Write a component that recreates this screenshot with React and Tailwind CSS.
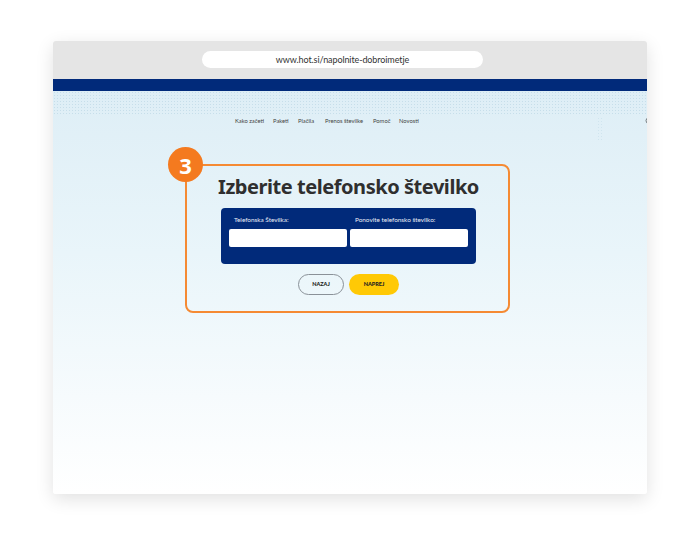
import React from "react";
import { Search } from "lucide-react";

const navLinks = [
  { label: "Kako začeti", width: "w-[38px]" },
  { label: "Paketi", width: "w-[25px]" },
  { label: "Plačila", width: "w-[27px]" },
  { label: "Prenos številke", width: "w-[48px]" },
  { label: "Pomoč", width: "w-[26px]" },
  { label: "Novosti", width: "w-[20px]" },
];

const Field = ({ label }) => (
  <div className="flex w-[118px] flex-col">
    <label className="mb-[4px] ml-[5px] h-[11px] text-[6.4px] leading-[11px] text-[#e8edf6]">{label}</label>
    <div className="h-[18px] rounded-[2px] bg-white" />
  </div>
);

const App = () => {
  return (
    <div className="h-[544px] w-[700px] overflow-hidden bg-white pl-[53px] pt-[41px] font-['Lato',sans-serif]">
      <div className="flex h-[453px] w-[594px] flex-col overflow-hidden rounded-[3px] shadow-[0_5px_18px_rgba(0,0,0,0.12)]">
        <div className="flex h-[38px] items-start justify-center bg-[#e5e5e5] pr-[15px] pt-[10px]">
          <div className="flex h-[17px] w-[281px] items-center justify-center rounded-full bg-white text-[9px] tracking-[-0.1px] text-[#333]">
            www.hot.si/napolnite-dobroimetje
          </div>
        </div>
        <div className="h-[12px] bg-[#012a7a]" />

        <div className="relative flex flex-1 flex-col bg-gradient-to-b from-[#deeef6] via-[#e9f5fa] via-40% to-white">
          <div className="h-[24px] bg-[radial-gradient(#c6deea_0.8px,transparent_0.9px)] bg-[length:3px_3px]" />
          <div className="absolute left-[544px] top-[26px] h-[23px] w-[6px] bg-[radial-gradient(#d0e5ef_0.8px,transparent_0.9px)] bg-[length:3px_3px]" />

          <nav className="mt-[1px] flex h-[10px] items-center pl-[182px] text-[5.8px] leading-[10px] text-[#444]">
            {navLinks.map((link) => (
              <a key={link.label} className={`${link.width} whitespace-nowrap`}>
                {link.label}
              </a>
            ))}
            <Search className="ml-auto mr-[-6px] h-[8px] w-[8px] text-[#444]" strokeWidth={2} />
          </nav>

          <div className="relative ml-[132px] mt-[38px] flex h-[149px] w-[325px] flex-col items-center rounded-[8px] border-2 border-[#f58a33] pl-[2px] pt-[7px]">
            <div className="absolute left-[-19px] top-[-19px] flex h-[35px] w-[35px] items-center justify-center rounded-full bg-[#f47a1f] font-['Noto_Sans',sans-serif] text-[22px] font-bold leading-none text-white">
              3
            </div>
            <h1 className="font-['Noto_Sans',sans-serif] text-[20px] font-bold leading-[28px] tracking-[-0.45px] text-[#2f2f2f]">
              Izberite telefonsko številko
            </h1>
            <div className="mt-[7px] flex h-[56px] w-[255px] gap-[3px] rounded-[4px] bg-[#012a7a] px-[8px] pt-[6px]">
              <Field label="Telefonska Številka:" />
              <Field label="Ponovite telefonsko številko:" />
            </div>
            <div className="mt-[10px] flex gap-[5px] text-[5.5px] font-black text-[#222]">
              <button className="flex h-[21px] w-[46px] items-center justify-center rounded-full border border-[#8a9198]">
                NAZAJ
              </button>
              <button className="flex h-[21px] w-[50px] items-center justify-center rounded-full bg-[#ffc905]">
                NAPREJ
              </button>
            </div>
          </div>
        </div>
      </div>
    </div>
  );
};

export default App;
